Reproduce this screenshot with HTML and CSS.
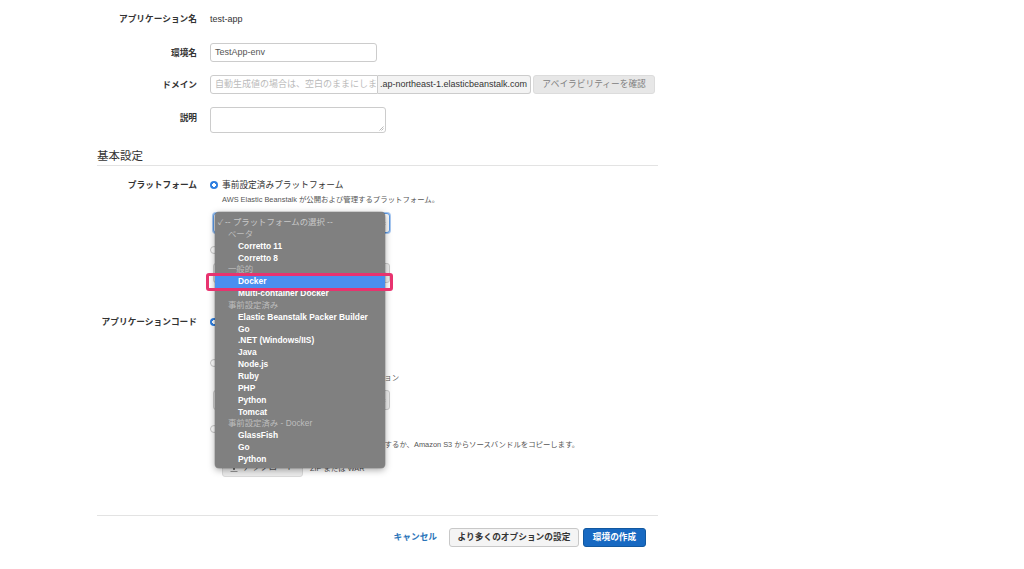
FILE: index.html
```html
<!DOCTYPE html>
<html lang="ja">
<head>
<meta charset="utf-8">
<title>環境の作成</title>
<link rel="stylesheet" href="styles.css">
</head>
<body>
<div class="page">
  <div class="row row-text">
    <div class="label">アプリケーション名</div>
    <div class="value">test-app</div>
  </div>
  <div class="row row-input">
    <div class="label">環境名</div>
    <div><div class="input input-env">TestApp-env</div></div>
  </div>
  <div class="row row-input row-domain">
    <div class="label">ドメイン</div>
    <div class="domain">
      <div class="input input-domain placeholder">自動生成値の場合は、空白のままにします</div>
      <div class="suffix">.ap-northeast-1.elasticbeanstalk.com</div>
      <div class="btn btn-check">アベイラビリティーを確認</div>
    </div>
  </div>
  <div class="row row-desc">
    <div class="label label-top">説明</div>
    <div><div class="textarea"><svg class="grip" width="6" height="6" viewBox="0 0 6 6"><path d="M5.5 1.5 L1.5 5.5 M5.5 3.5 L3.5 5.5" stroke="#aaa" stroke-width="0.8"/></svg></div></div>
  </div>

  <div class="section-title">基本設定</div>

  <div class="row row-platform">
    <div class="label">プラットフォーム</div>
    <div class="options">
      <div class="opt"><span class="radio on"></span><span>事前設定済みプラットフォーム</span></div>
      <div class="desc">AWS Elastic Beanstalk が公開および管理するプラットフォーム。</div>
      <div class="select select-focus"><span>-- プラットフォームの選択 --</span><svg width="6" height="9" viewBox="0 0 6 9"><path d="M3 0.5 L5.5 3.5 H0.5 Z M3 8.5 L5.5 5.5 H0.5 Z" fill="#555"/></svg></div>
      <div class="opt opt-custom"><span class="radio"></span><span>カスタムプラットフォーム</span></div>
      <div class="select select-disabled"><span>-- カスタムプラットフォームの選択 --</span><svg width="6" height="9" viewBox="0 0 6 9"><path d="M3 0.5 L5.5 3.5 H0.5 Z M3 8.5 L5.5 5.5 H0.5 Z" fill="#999"/></svg></div>
    </div>
  </div>

  <div class="row row-code">
    <div class="label">アプリケーションコード</div>
    <div class="options">
      <div class="opt"><span class="radio on"></span><span>サンプルアプリケーション</span></div>
      <div class="desc">サンプルコードを使用して開始します。</div>
      <div class="opt opt-existing"><span class="radio"></span><span>既存のバージョン</span></div>
      <div class="desc desc-existing">アカウントにある既存のアプリケーションバージョン</div>
      <div class="select select-version"><span>-- バージョンの選択 --</span><svg width="6" height="9" viewBox="0 0 6 9"><path d="M3 0.5 L5.5 3.5 H0.5 Z M3 8.5 L5.5 5.5 H0.5 Z" fill="#999"/></svg></div>
      <div class="opt opt-upload"><span class="radio"></span><span>コードのアップロード</span></div>
      <div class="desc desc-upload">コンピュータからソースバンドルをアップロードするか、Amazon S3 からソースバンドルをコピーします。</div>
      <div class="upload-row">
        <div class="btn btn-upload"><svg width="8" height="8" viewBox="0 0 8 8"><path d="M4 0.5 L7 3.5 H5 V6 H3 V3.5 H1 Z M0.5 7 H7.5 V7.8 H0.5 Z" fill="#777"/></svg>アップロード</div>
        <span class="hint">ZIP または WAR</span>
      </div>
    </div>
  </div>

  <div class="footer">
    <a class="link-cancel">キャンセル</a>
    <div class="btn btn-more">より多くのオプションの設定</div>
    <div class="btn btn-create">環境の作成</div>
  </div>
</div>

<div class="menu">
  <div class="mi mi-title"><span class="check">✓</span>-- プラットフォームの選択 --</div>
  <div class="mi grp">ベータ</div>
  <div class="mi item">Corretto 11</div>
  <div class="mi item">Corretto 8</div>
  <div class="mi grp">一般的</div>
  <div class="mi item active">Docker</div>
  <div class="mi item">Multi-container Docker</div>
  <div class="mi grp">事前設定済み</div>
  <div class="mi item">Elastic Beanstalk Packer Builder</div>
  <div class="mi item">Go</div>
  <div class="mi item">.NET (Windows/IIS)</div>
  <div class="mi item">Java</div>
  <div class="mi item">Node.js</div>
  <div class="mi item">Ruby</div>
  <div class="mi item">PHP</div>
  <div class="mi item">Python</div>
  <div class="mi item">Tomcat</div>
  <div class="mi grp">事前設定済み - Docker</div>
  <div class="mi item">GlassFish</div>
  <div class="mi item">Go</div>
  <div class="mi item">Python</div>
</div>
<div class="highlight-frame"></div>
</body>
</html>
```

FILE: styles.css
```css
* { box-sizing: border-box; }
html, body { margin: 0; padding: 0; background: #fff; }
body {
  font-family: "Liberation Sans", "Noto Sans CJK JP", sans-serif;
  font-size: 8.7px;
  color: #333;
  width: 1024px;
  height: 569px;
  overflow: hidden;
  position: relative;
}
.page { margin-left: 97px; width: 561px; padding-top: 13px; }

.row { display: grid; grid-template-columns: 100px 1fr; column-gap: 13px; }
.label { text-align: right; font-weight: bold; line-height: 12px; color: #333; }
.row-text { line-height: 12px; }
.value { font-size: 9px; line-height: 12px; color: #333; }

.row-input { align-items: center; margin-top: 18px; }
.row-domain { margin-top: 13px; }
.input {
  height: 19px;
  border: 1px solid #ccc;
  border-radius: 3px;
  padding: 0 4px;
  font-size: 9px;
  line-height: 17px;
  color: #555;
  white-space: nowrap;
  overflow: hidden;
  background: #fff;
}
.input-env { width: 167px; }
.domain { display: flex; align-items: center; }
.input-domain { width: 168px; border-radius: 3px 0 0 3px; }
.placeholder { color: #bbb; font-size: 9px; }
.suffix {
  height: 19px;
  width: 153px;
  border: 1px solid #ccc;
  border-left: none;
  border-radius: 0 3px 3px 0;
  background: #f3f3f3;
  font-size: 9px;
  line-height: 17px;
  padding-left: 2px;
  color: #333;
  white-space: nowrap;
}
.btn {
  height: 19px;
  border-radius: 3px;
  line-height: 17px;
  white-space: nowrap;
  text-align: center;
}
.btn-check {
  margin-left: 2px;
  width: 122px;
  background: #e7e7e7;
  border: 1px solid #dcdcdc;
  color: #808080;
}

.row-desc { margin-top: 13px; }
.label-top { padding-top: 5px; }
.textarea {
  width: 176px;
  height: 26px;
  border: 1px solid #ccc;
  border-radius: 3px;
  position: relative;
}
.grip { position: absolute; right: 1px; bottom: 1px; }

.section-title {
  margin-top: 16px;
  font-size: 11.5px;
  line-height: 14px;
  padding-bottom: 2px;
  border-bottom: 1px solid #e3e3e3;
  color: #333;
}

.row-platform { margin-top: 13px; }
.options { display: flex; flex-direction: column; align-items: flex-start; }
.opt { display: flex; align-items: center; gap: 4px; line-height: 12px; color: #333; }
.radio {
  width: 8px; height: 8px;
  border-radius: 50%;
  border: 1px solid #c8c8c8;
  background: #fff;
  flex: none;
}
.radio.on {
  border: none;
  background: radial-gradient(circle, #fff 0 1.6px, #2f7fe0 2.1px);
}
.desc {
  margin-top: 4px;
  padding-left: 12px;
  font-size: 7.4px;
  line-height: 10px;
  color: #555;
  white-space: nowrap;
}
.select {
  margin-left: 3px;
  width: 177px;
  height: 20px;
  border: 1px solid #ccc;
  border-radius: 3px;
  background: #fafafa;
  display: flex;
  align-items: center;
  justify-content: space-between;
  padding: 0 3px 0 5px;
  font-size: 8.4px;
  color: #333;
}
.select-focus { margin-top: 8px; border-color: #5b9ae6; box-shadow: 0 0 0 1px #a9c9f2; }
.opt-custom { margin-top: 11px; }
.select-disabled { margin-top: 7px; background: #efefef; color: #999; }

.row-code { margin-top: 33px; }
.opt-existing { margin-top: 15px; }
.desc-existing { margin-top: 4px; }
.select-version { margin-top: 7px; background: #efefef; color: #999; }
.opt-upload { margin-top: 13px; }
.desc-upload { margin-top: 5px; }
.upload-row { margin-top: 8px; margin-left: 12px; display: flex; align-items: center; gap: 7px; }
.btn-upload {
  width: 81px;
  background: #ececec;
  border: 1px solid #dadada;
  color: #555;
  display: flex; align-items: center; justify-content: center; gap: 4px;
}
.hint { font-size: 7.4px; color: #555; }

.footer {
  margin-top: 38px;
  border-top: 1px solid #e3e3e3;
  padding-top: 12px;
  padding-right: 12px;
  display: flex;
  justify-content: flex-end;
  align-items: center;
}
.link-cancel { color: #2b74b9; font-weight: bold; margin-right: 12px; line-height: 19px; }
.btn-more {
  width: 130px;
  background: #f4f4f4;
  border: 1px solid #c8c8c8;
  color: #333;
  font-weight: bold;
  margin-right: 4px;
}
.btn-create {
  width: 63px;
  background: #1769c2;
  border: 1px solid #12589f;
  color: #fff;
  font-weight: bold;
}

/* open dropdown overlay */
.menu {
  position: absolute;
  left: 215px;
  top: 212px;
  width: 170px;
  height: 256px;
  padding-top: 5px;
  background: #808080;
  border-radius: 4px;
  box-shadow: 0 2px 7px rgba(0,0,0,0.35), 0 0 0 0.5px rgba(0,0,0,0.25);
  font-size: 8.4px;
}
.mi { height: 11.85px; line-height: 11.85px; white-space: nowrap; }
.mi-title { color: #c9c9c9; padding-left: 3px; }
.check { display: inline-block; width: 7px; font-size: 7.5px; }
.grp { color: #bdbdbd; padding-left: 13px; }
.item { color: #fff; font-weight: bold; padding-left: 23px; }
.item.active { background: #4a8ff0; }

.highlight-frame {
  position: absolute;
  left: 206px;
  top: 273px;
  width: 187px;
  height: 18px;
  border: 3px solid #e8336f;
  border-radius: 3px;
}
```
